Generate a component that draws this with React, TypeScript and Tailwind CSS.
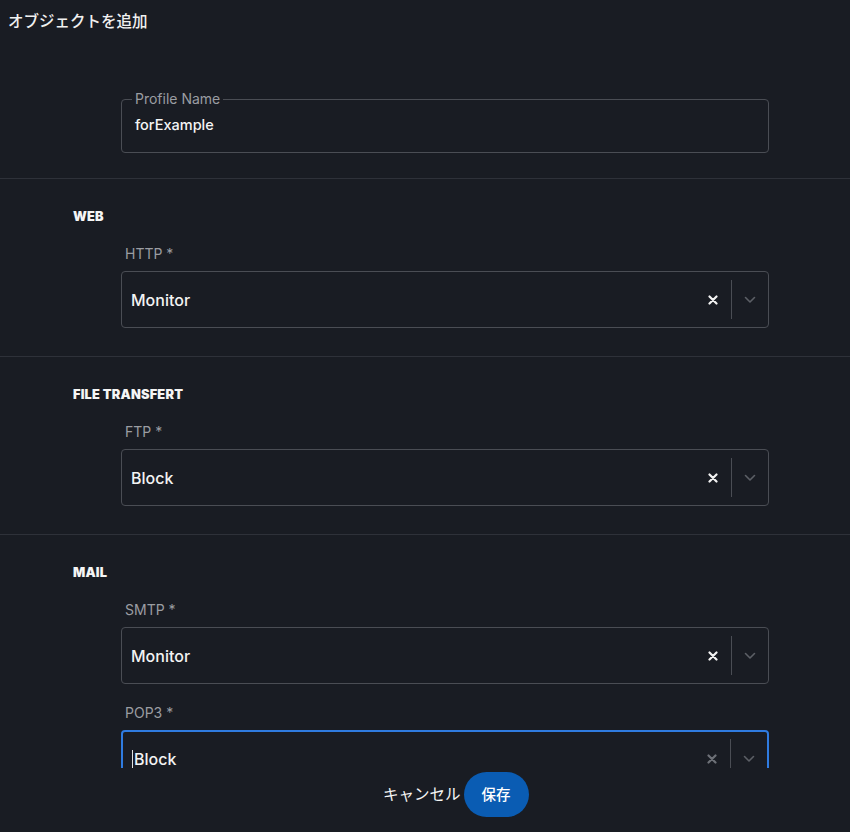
import React from "react";

const font = { fontFamily: 'Inter, "Noto Sans CJK JP", sans-serif' };

function ClearIcon({ dim }: { dim?: boolean }) {
  return (
    <svg width="10" height="10" viewBox="0 0 10 10" className={dim ? "text-[#6d7077]" : "text-[#f2f2f2]"}>
      <path d="M1.5 1.5 L8.5 8.5 M8.5 1.5 L1.5 8.5" stroke="currentColor" strokeWidth="2.2" strokeLinecap="round" />
    </svg>
  );
}

function Chevron() {
  return (
    <svg width="12" height="8" viewBox="0 0 12 8" className="text-[#5c5f66]">
      <path d="M1.5 1.5 L6 6 L10.5 1.5" stroke="currentColor" strokeWidth="1.6" fill="none" strokeLinecap="round" strokeLinejoin="round" />
    </svg>
  );
}

function SelectField({ label, value, focused }: { label: string; value: string; focused?: boolean }) {
  return (
    <div className="ml-[121px] w-[648px]">
      <div className="text-[14px] leading-[20px] text-[#9b9da2] pl-[4px] mb-[7px]">{label}</div>
      <div
        className={
          "h-[57px] rounded-[4px] flex items-center " +
          (focused ? "border-[2px] border-[#2f7be0]" : "border border-[#4a4d54]")
        }
      >
        <div className="flex-1 pl-[9px] text-[16px] font-medium text-[#f3f3f3] flex items-center">
          {focused && <span className="w-px h-[18px] bg-[#e0e0e0] mr-[1px]" />}
          {value}
        </div>
        <div className="w-[36px] flex items-center justify-center">
          <ClearIcon dim={focused} />
        </div>
        <div className="w-px h-[39px] bg-[#4a4d54]" />
        <div className="w-[36px] flex items-center justify-center">
          <Chevron />
        </div>
      </div>
    </div>
  );
}

function Section({ title, children }: { title: string; children: React.ReactNode }) {
  return (
    <div className="border-t border-[#2e3139] pt-[30px] pb-[28px]">
      <div className="pl-[73px] text-[12.8px] leading-[16px] font-black tracking-[0.2px] text-[#f5f5f5] uppercase mb-[19px]">
        {title}
      </div>
      {children}
    </div>
  );
}

export default function App() {
  return (
    <div className="h-[832px] w-[850px] bg-[#191c23] text-white flex flex-col overflow-hidden" style={font}>
      <div className="h-[44px] pl-[8px] pt-[11px] text-[15.5px] leading-[22px] font-medium text-[#f0f0f0]">
        オブジェクトを追加
      </div>
      <div className="flex-1 overflow-hidden">
        <div className="pt-[55px] pb-[25px]">
          <div className="relative ml-[121px] w-[648px] h-[54px] rounded-[4px] border border-[#4a4d54] flex items-center pl-[13px] pb-[2px]">
            <span className="absolute left-[10px] top-[-11px] px-[3px] bg-[#191c23] text-[14px] leading-[20px] text-[#9b9da2]">
              Profile Name
            </span>
            <span className="text-[14.5px] font-medium text-[#f5f5f5]">forExample</span>
          </div>
        </div>
        <Section title="Web">
          <SelectField label="HTTP *" value="Monitor" />
        </Section>
        <Section title="File Transfert">
          <SelectField label="FTP *" value="Block" />
        </Section>
        <Section title="Mail">
          <SelectField label="SMTP *" value="Monitor" />
          <div className="h-[19px]" />
          <SelectField label="POP3 *" value="Block" focused />
        </Section>
      </div>
      <div className="h-[64px] flex items-start pt-[4px] pl-[383px] gap-[3px]">
        <button className="h-[45px] text-[15.5px] text-[#f5f5f5]">キャンセル</button>
        <button className="h-[45px] px-[18px] rounded-full bg-[#0a5cb3] text-[14.5px] font-medium text-white">
          保存
        </button>
      </div>
    </div>
  );
}
